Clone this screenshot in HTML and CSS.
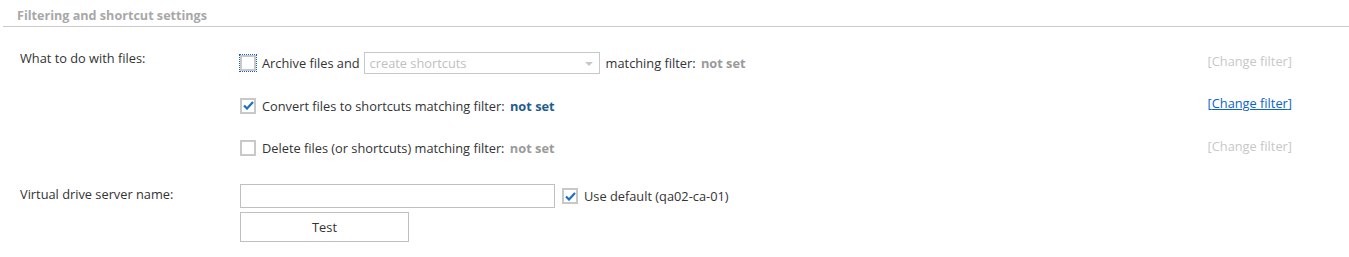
FILE: index.html
```html
<!DOCTYPE html>
<html lang="en">

<head>
    <meta charset="UTF-8">
    <title>Filtering and shortcut settings</title>
    <link rel="stylesheet" href="styles.css">
</head>

<body>
    <div class="section">
        <div class="section-title">Filtering and shortcut settings</div>

        <div class="form-row files-row">
            <div class="form-label">What to do with files:</div>
            <div class="options">
                <div class="option">
                    <span class="check focused"></span>
                    <span>Archive files and</span>
                    <span class="select">
                        <span>create shortcuts</span>
                        <span class="select-arrow"></span>
                    </span>
                    <span>matching filter: <b class="value">not set</b></span>
                    <span class="change disabled">[Change filter]</span>
                </div>
                <div class="option">
                    <span class="check checked">
                        <svg width="11" height="9" viewBox="0 0 11 9"><path d="M1 4.5 L4 7.5 L10 1" fill="none" stroke="#1c6fc4" stroke-width="2.2"/></svg>
                    </span>
                    <span>Convert files to shortcuts matching filter: <b class="value active">not set</b></span>
                    <a class="change" href="#">[<u>Change filter</u>]</a>
                </div>
                <div class="option">
                    <span class="check"></span>
                    <span>Delete files (or shortcuts) matching filter: <b class="value">not set</b></span>
                    <span class="change disabled">[Change filter]</span>
                </div>
            </div>
        </div>

        <div class="form-row server-row">
            <div class="form-label">Virtual drive server name:</div>
            <div class="server">
                <div class="server-line">
                    <span class="text-input"></span>
                    <span class="check checked">
                        <svg width="11" height="9" viewBox="0 0 11 9"><path d="M1 4.5 L4 7.5 L10 1" fill="none" stroke="#1c6fc4" stroke-width="2.2"/></svg>
                    </span>
                    <span>Use default (qa02-ca-01)</span>
                </div>
                <button class="btn">Test</button>
            </div>
        </div>
    </div>
</body>

</html>
```

FILE: styles.css
```css
* {
    margin: 0;
    padding: 0;
    box-sizing: border-box;
}

body {
    font-family: 'Open Sans', 'Noto Sans', Arial, sans-serif;
    font-size: 12.8px;
    color: #333;
    background: #fff;
}

.section-title {
    margin-left: 3px;
    padding: 7px 0 0 14px;
    height: 27px;
    border-bottom: 1px solid #cacaca;
    font-size: 12.6px;
    font-weight: bold;
    color: #a8a8a8;
}

.form-row {
    display: flex;
    padding: 0 57px 0 20px;
}

.files-row {
    margin-top: 25px;
}

.form-label {
    width: 220px;
    flex-shrink: 0;
    line-height: 18px;
    margin-top: -3px;
}

.options {
    flex: 1;
    display: flex;
    flex-direction: column;
    gap: 20.5px;
}

.option {
    display: flex;
    align-items: center;
    height: 22px;
    gap: 6px;
}

.check {
    width: 16px;
    height: 16px;
    border: 2px solid #c8c8c8;
    background: #fff;
    display: inline-flex;
    align-items: center;
    justify-content: center;
    flex-shrink: 0;
}

.check.focused {
    outline: 1px dotted #1c5fb8;
    outline-offset: 0;
}

.select {
    width: 236px;
    height: 22px;
    border: 1px solid #c8c8c8;
    display: inline-flex;
    align-items: center;
    justify-content: space-between;
    padding: 0 6px 0 5px;
    margin-left: -2px;
    color: #c0c0c0;
}

.select-arrow {
    width: 0;
    height: 0;
    border-left: 4px solid transparent;
    border-right: 4px solid transparent;
    border-top: 4px solid #c8c8c8;
    margin-top: 2px;
}

.value {
    color: #9a9a9a;
    margin-left: 2px;
}

.value.active {
    color: #1f5d91;
}

.change {
    margin-left: auto;
    margin-bottom: 5px;
    color: #0a64c8;
    text-decoration: none;
}

.change.disabled {
    color: #c8c8c8;
}

.server-row {
    margin-top: 25px;
}

.server-row .form-label {
    padding-top: 4px;
}

.server {
    display: flex;
    flex-direction: column;
    gap: 4px;
}

.server-line {
    display: flex;
    align-items: center;
    gap: 6px;
}

.text-input {
    width: 315px;
    height: 24px;
    border: 1px solid #c0c0c0;
    margin-right: 1px;
}

.btn {
    width: 169px;
    height: 30px;
    border: 1px solid #c0c0c0;
    background: #fff;
    font-family: inherit;
    font-size: 12.8px;
    color: #333;
}
```
